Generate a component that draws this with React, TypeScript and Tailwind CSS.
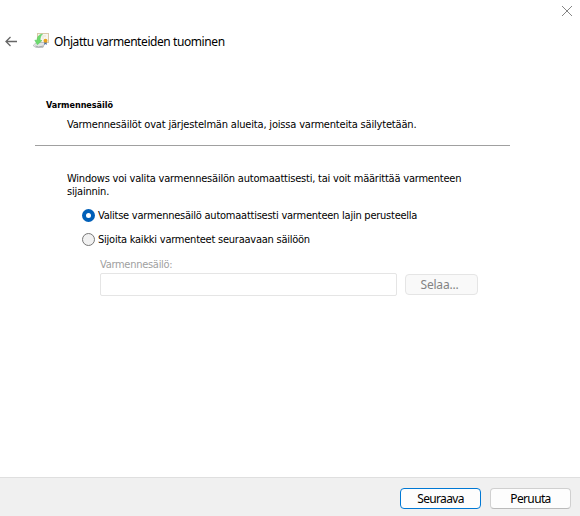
import type { ReactNode } from "react";

const dialogFont = "font-[family-name:'DejaVu_Sans_Condensed','DejaVu_Sans',sans-serif] [font-stretch:condensed]";

function CertificateIcon() {
  return (
    <svg className="ml-[15px] h-4 w-4 shrink-0" viewBox="0 0 16 16">
      <rect x="4.5" y="0.5" width="11" height="9" fill="#f8f5ef" stroke="#d8c8a8" />
      <path d="M9 3h4M9 5h2" stroke="#e8e2d5" />
      <path d="M0.5 12L3.5 9.5h8.5l-2 5H3L0.5 13z" fill="#e2e4e4" stroke="#b9bdbf" strokeWidth=".8" />
      <path d="M2.5 13l3 1 5-1" fill="none" stroke="#a3a8a9" />
      <path d="M9.5 1C6 1.5 4.2 3.6 4 7.2H1.8l2.6 4.6L9 7.5H7.2C7 5 7.5 3 9.5 1z" fill="#6edb6c" stroke="#4cc45a" strokeWidth=".5" />
      <path d="M11.3 9v3l1.2-1 1.2 1V9z" fill="#4b6e9f" />
      <circle cx="12.5" cy="7.8" r="2" fill="#e9a21a" />
    </svg>
  );
}

function Option({ checked = false, children }: { checked?: boolean; children: ReactNode }) {
  return (
    <div className="flex h-6 items-center">
      <span
        className={
          checked
            ? "flex h-[13px] w-[13px] items-center justify-center rounded-full bg-[#005fb8]"
            : "h-[13px] w-[13px] rounded-full border border-[#777] bg-[#f1f1f1]"
        }
      >
        {checked && <span className="h-[5px] w-[5px] rounded-full bg-white" />}
      </span>
      {children}
    </div>
  );
}

export default function App() {
  return (
    <main className={`flex h-[516px] w-[580px] flex-col overflow-hidden whitespace-nowrap bg-white text-[11px] leading-[13px] text-black ${dialogFont}`}>
      <div className="flex h-[30px] shrink-0 justify-end pr-[7px] pt-[5px]">
        <svg className="h-3 w-3" viewBox="0 0 12 12" stroke="#858585">
          <path d="M1 1l10 10M11 1L1 11" />
        </svg>
      </div>
      <header className="flex h-[22px] shrink-0 items-center pl-[5px]">
        <svg className="h-[11px] w-[13px]" viewBox="0 0 13 11" fill="none" stroke="#666" strokeWidth="1.3">
          <path d="M12 5.5H1M5.5 1L1 5.5 5.5 10" />
        </svg>
        <CertificateIcon />
        <h1 className="ml-[5px] pt-[2px] font-[family-name:'Noto_Sans',sans-serif] text-[12px] leading-4 tracking-[-0.42px]"><span>Ohjattu varmenteiden tuominen</span></h1>
      </header>

      <section className="mt-[47px] pl-[46px]">
        <h2 className="text-[9px] leading-[13px] font-bold"><span className="tracking-[-0.05px]">Varmennesäilö</span></h2>
        <p className="ml-[21px] mt-[6px]"><span className="tracking-[-0.18px]">Varmennesäilöt ovat järjestelmän alueita, joissa varmenteita säilytetään.</span></p>
      </section>
      <hr className="ml-[35px] mt-[14px] w-[475px] border-t border-[#a0a0a0]" />

      <section className="flex grow flex-col pl-[67px] pt-[26px]">
        <p className="tracking-[-0.21px]"><span>Windows voi valita varmennesäilön automaattisesti, tai voit määrittää varmenteen</span><br /><span>sijainnin.</span></p>
        <div className="ml-[15px] mt-[5px] tracking-[-0.24px]">
          <Option checked><span className="ml-[3px] pt-px">Valitse varmennesäilö automaattisesti varmenteen lajin perusteella</span></Option>
          <Option><span className="ml-[3px] pt-px">Sijoita kaikki varmenteet seuraavaan säilöön</span></Option>
        </div>
        <label className="ml-[33px] mt-[7px] tracking-[-0.28px] text-[#a0a0a0]"><span>Varmennesäilö:</span></label>
        <div className="ml-[33px] mt-[2px] flex items-center gap-2">
          <input disabled className="h-[23px] w-[297px] rounded-[2px] border border-[#e5e5e5] bg-white" />
          <button disabled className="h-[21px] w-[73px] rounded-[4px] border border-[#e5e5e5] bg-[#f9f9f9] pr-1 font-[family-name:'Noto_Sans',sans-serif] text-[12px] tracking-[-0.2px] text-[#838383]"><span>Selaa...</span></button>
        </div>
      </section>

      <footer className="flex h-[39px] shrink-0 justify-end gap-[9px] border-t border-[#dfdfdf] bg-[#f0f0f0] pr-[9px] pt-[10px] font-[family-name:'Noto_Sans',sans-serif] text-[12px] tracking-[-0.65px]">
        <button className="h-[21px] w-[81px] rounded-[4px] border border-[#0078d4] bg-[#fdfdfd]"><span>Seuraava</span></button>
        <button className="h-[21px] w-[81px] rounded-[4px] border border-[#d0d0d0] border-b-[#bbb] bg-[#fdfdfd]"><span>Peruuta</span></button>
      </footer>
    </main>
  );
}
